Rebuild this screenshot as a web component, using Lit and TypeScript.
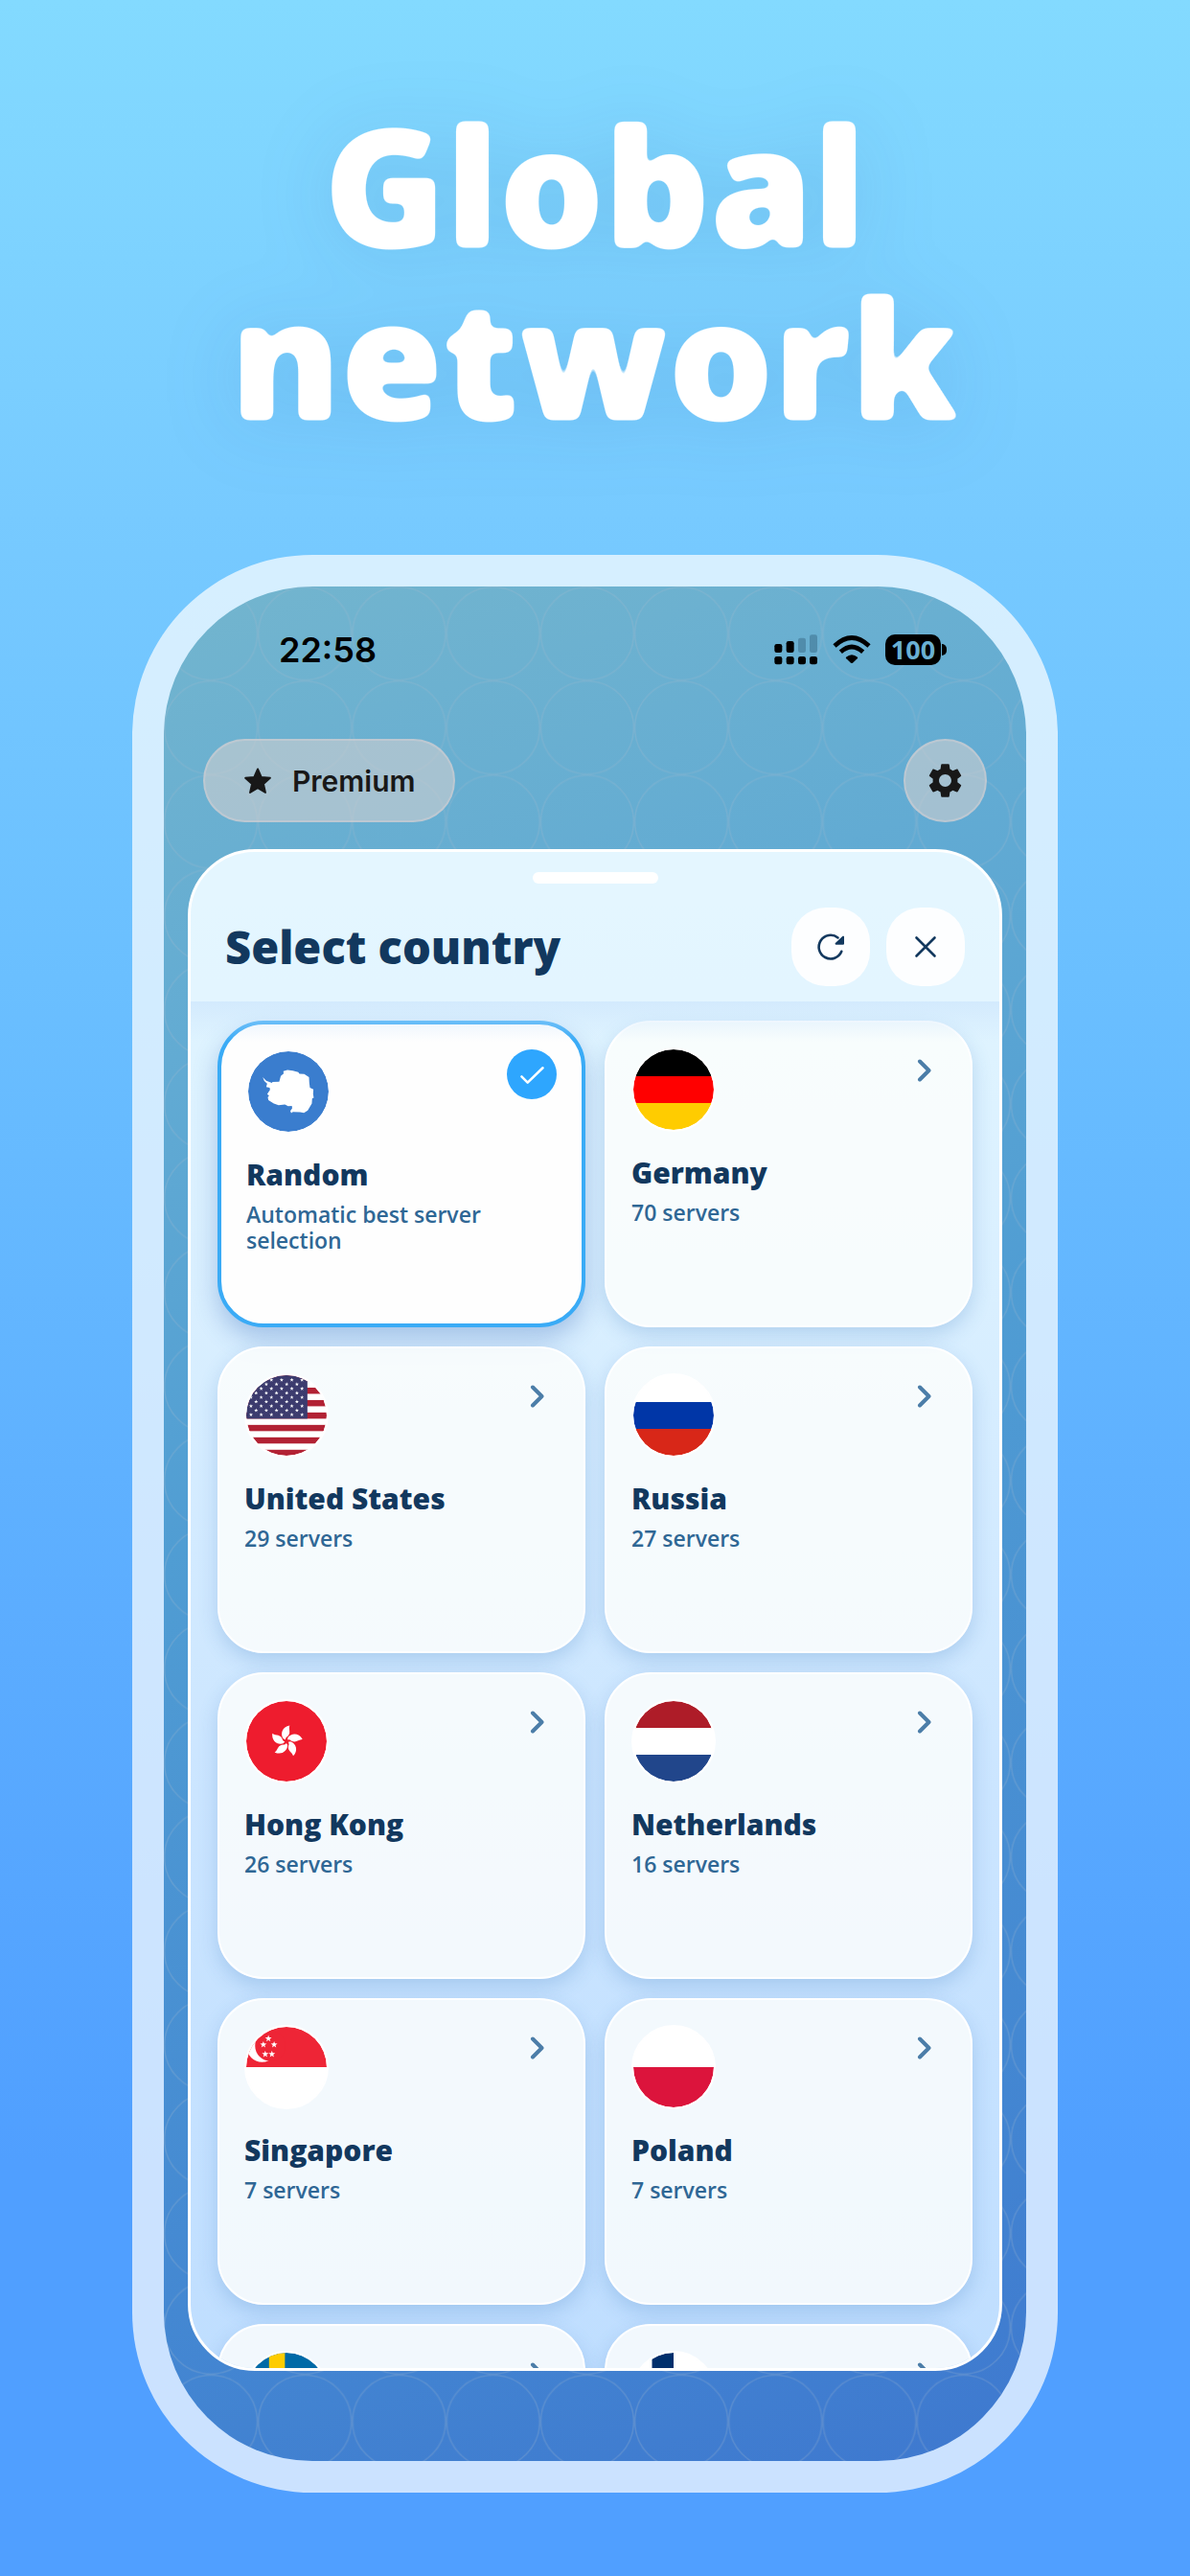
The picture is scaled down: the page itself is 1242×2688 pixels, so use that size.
import { LitElement, html, svg, css, nothing } from "lit";
import { customElement, property, state } from "lit/decorators.js";

interface Country {
  id: string;
  name?: string;
  detail?: string;
}

const COUNTRIES: Country[] = [
  { id: "random", name: "Random", detail: "Automatic best server selection" },
  { id: "de", name: "Germany", detail: "70 servers" },
  { id: "us", name: "United States", detail: "29 servers" },
  { id: "ru", name: "Russia", detail: "27 servers" },
  { id: "hk", name: "Hong Kong", detail: "26 servers" },
  { id: "nl", name: "Netherlands", detail: "16 servers" },
  { id: "sg", name: "Singapore", detail: "7 servers" },
  { id: "pl", name: "Poland", detail: "7 servers" },
  { id: "se" },
  { id: "fi" },
];

/** Points of a five-pointed star centred on (cx, cy). */
const starPoints = (cx: number, cy: number, r: number): string =>
  Array.from({ length: 10 }, (_, i) => {
    const radius = i % 2 ? r * 0.4 : r;
    const angle = (Math.PI / 5) * i - Math.PI / 2;
    return `${(cx + radius * Math.cos(angle)).toFixed(1)},${(cy + radius * Math.sin(angle)).toFixed(1)}`;
  }).join(" ");

const star = (cx: number, cy: number, r: number) =>
  svg`<polygon points=${starPoints(cx, cy, r)} fill="#fff"></polygon>`;

const bands = (...colors: string[]) =>
  colors.map(
    (color, i) =>
      svg`<rect x="0" y=${(254 / colors.length) * i} width="254" height=${254 / colors.length + 1} fill=${color}></rect>`,
  );

const usStars = () =>
  Array.from({ length: 9 }, (_, row) =>
    Array.from({ length: row % 2 ? 5 : 6 }, (_, col) =>
      star(15 + col * 32.2 + (row % 2 ? 16.1 : 0), 15 + row * 13.7, 6.5),
    ),
  );

const FLAGS: Record<string, unknown> = {
  random: svg`
    <rect width="254" height="254" fill="#3a7dce"></rect>
    <path fill="#fff" d="M46 82L57 93L75 100L70 107L77 97L98 96L103 78L112 70L111 63L124 59L141 61L158 66L162 71L177 72L192 82L193 100L195 115L206 120L205 135L207 147L202 149L201 165L188 187L176 194L164 192L141 191L136 195L133 188L139 180L138 172L126 173L116 168L96 170L81 165L64 154L62 145L66 140L60 135L69 122L68 115L57 113L60 102L51 94Z"></path>`,
  de: bands("#000", "#f00", "#fc0"),
  us: svg`
    <rect width="254" height="254" fill="#fff"></rect>
    ${[0, 2, 4, 6, 8, 10, 12].map((i) => svg`<rect y=${i * 19.6} width="254" height="19.6" fill="#b22234"></rect>`)}
    <rect width="193" height="137.2" fill="#3c3b6e"></rect>${usStars()}`,
  ru: bands("#fff", "#0036a7", "#d82718"),
  hk: svg`
    <rect width="254" height="254" fill="#ee1c2e"></rect>
    ${[0, 72, 144, 216, 288].map(
      (a) => svg`<path fill="#fff" transform="rotate(${a} 127 127)" d="M117 119C106 103 114 81 137 77C132 91 145 103 126 115Q124 118 124 122Q120 121 117 119Z"></path>`,
    )}`,
  nl: bands("#ae1c28", "#fff", "#21468b"),
  sg: svg`
    <rect width="254" height="254" fill="#fff"></rect>
    <rect width="254" height="127" fill="#ee2536"></rect>
    <circle cx="50" cy="62" r="49" fill="#fff"></circle>
    <circle cx="76" cy="60" r="48" fill="#ee2536"></circle>
    ${star(70, 37, 11)}${star(54, 56, 11)}${star(88, 56, 11)}${star(60, 86, 11)}${star(81, 86, 11)}`,
  pl: bands("#fff", "#dc143c"),
  se: svg`
    <rect width="254" height="254" fill="#006aa7"></rect>
    <path fill="#fecc00" d="M72 0h50v254H72zM0 102h254v50H0z"></path>`,
  fi: svg`
    <rect width="254" height="254" fill="#fff"></rect>
    <path fill="#002f6c" d="M59 0h68v254H59zM0 93h254v68H0z"></path>`,
};

@customElement("country-card")
export class CountryCard extends LitElement {
  @property({ attribute: false }) country!: Country;
  @property({ type: Boolean }) selected = false;

  static styles = css`
    :host {
      display: block;
      min-width: 0;
    }
    .card {
      box-sizing: border-box;
      display: grid;
      grid-template-columns: 1fr auto;
      align-content: start;
      width: 100%;
      height: 320px;
      padding: 26px;
      border: 2px solid #fff;
      border-radius: 48px;
      background: rgba(255, 255, 253, 0.79);
      box-shadow: 0 8px 20px rgba(60, 120, 190, 0.24);
      color: #12385e;
      font: inherit;
      text-align: left;
      cursor: pointer;
    }
    .selected {
      border: 4px solid #3aabf6;
      background: #fefefe;
      box-shadow: 0 12px 26px rgba(50, 100, 180, 0.32);
    }
    .flag {
      box-sizing: border-box;
      display: block;
      width: 88px;
      height: 88px;
      border: 2px solid #fff;
      border-radius: 50%;
      background: #fff;
    }
    .chevron {
      display: block;
      width: 24px;
      height: 24px;
      margin: 12px 10px 0 0;
    }
    .check {
      display: block;
      width: 52px;
      height: 52px;
    }
    .name {
      grid-column: 1 / -1;
      margin-top: 23px;
      font-size: 30px;
      font-weight: 800;
      line-height: 40px;
    }
    .detail {
      grid-column: 1 / -1;
      margin-top: 8px;
      padding-right: 60px;
      color: #2f6795;
      font-size: 23px;
      font-weight: 600;
      line-height: 27px;
    }
  `;

  render() {
    const { id, name, detail } = this.country;
    return html`
      <button class="card ${this.selected ? "selected" : ""}" aria-pressed=${this.selected ? "true" : "false"}>
        <svg class="flag" viewBox="0 0 254 254" aria-hidden="true">
          <clipPath id="round"><circle cx="127" cy="127" r="127"></circle></clipPath>
          <g clip-path="url(#round)">${FLAGS[id]}</g>
        </svg>
        ${this.selected
          ? html`<svg class="check" viewBox="0 0 54 54" aria-hidden="true">
              <circle cx="27" cy="27" r="27" fill="#2ea6fe"></circle>
              <path d="M16 29.5l6.500 6.500L39 20" fill="none" stroke="#fff" stroke-width="2.600" stroke-linecap="round" stroke-linejoin="round"></path>
            </svg>`
          : html`<svg class="chevron" viewBox="0 0 24 24" aria-hidden="true">
              <path d="M7 2.500L16.500 12L7 21.500" fill="none" stroke="#4b7da8" stroke-width="4" stroke-linecap="round" stroke-linejoin="round"></path>
            </svg>`}
        ${name ? html`<span class="name">${name}</span>` : nothing}
        ${detail ? html`<span class="detail">${detail}</span>` : nothing}
      </button>
    `;
  }
}

@customElement("app-root")
export class AppRoot extends LitElement {
  @state() private selectedId = "random";

  static styles = css`
    :host {
      display: block;
      font-family: "Open Sans", "Noto Sans", sans-serif;
    }
    .poster {
      box-sizing: border-box;
      display: flex;
      flex-direction: column;
      height: 100vh;
      padding: 101px 138px 87px;
      background: linear-gradient(#83daff 0%, #77caff 20%, #6abfff 38%, #5bacff 64%, #509fff 84%);
    }
    .defs {
      position: absolute;
      width: 0;
      height: 0;
    }
    .headline {
      margin: 0 0 118px;
      color: #fff;
      font-size: 172px;
      font-weight: 800;
      line-height: 180px;
      text-align: center;
      filter: url(#soft-corners) drop-shadow(0 6px 40px rgba(20, 80, 140, 0.14));
    }
    .phone {
      flex: 1;
      display: flex;
      min-height: 0;
      padding: 33px;
      border-radius: 188px;
      background: rgba(255, 255, 255, 0.7);
    }
    .screen {
      box-sizing: border-box;
      position: relative;
      flex: 1;
      display: flex;
      flex-direction: column;
      min-width: 0;
      padding: 39px 0 94px;
      border-radius: 155px;
      overflow: hidden;
      background: linear-gradient(162deg, #73b5ce 0%, #62abd3 22%, #509dd3 45%, #4488d2 80%, #3e78cf 100%);
    }
    .pattern {
      position: absolute;
      inset: 0;
      width: 100%;
      height: 100%;
    }
    .status,
    .toolbar,
    .sheet {
      position: relative;
    }
    .status {
      display: flex;
      align-items: center;
      justify-content: space-between;
      height: 54px;
      padding: 0 83px 0 120px;
      font-family: Inter, sans-serif;
    }
    .time {
      font-size: 36px;
      font-weight: 600;
      line-height: 54px;
      color: #000;
    }
    .indicators {
      display: flex;
      align-items: center;
    }
    .signal {
      width: 46px;
      height: 32px;
      margin-right: 15px;
    }
    .wifi {
      width: 40px;
      height: 30px;
      margin-right: 15px;
    }
    .battery {
      display: flex;
      align-items: center;
      gap: 1px;
    }
    .level {
      width: 58px;
      height: 32px;
      border-radius: 10px;
      background: #000;
      color: #6ab0d3;
      font-family: "Open Sans", sans-serif;
      font-size: 27px;
      font-weight: 700;
      line-height: 32px;
      text-align: center;
    }
    .tip {
      width: 5px;
      height: 12px;
      border-radius: 0 6px 6px 0;
      background: #000;
    }
    .toolbar {
      display: flex;
      justify-content: space-between;
      margin: 66px 41px 28px;
    }
    .pill {
      box-sizing: border-box;
      display: flex;
      align-items: center;
      justify-content: center;
      height: 87px;
      border: 2px solid rgba(205, 205, 210, 0.6);
      border-radius: 44px;
      background: rgba(206, 206, 208, 0.6);
      color: #181818;
      cursor: pointer;
    }
    .premium {
      gap: 20px;
      padding: 0 39px;
      font-family: Inter, sans-serif;
      font-size: 30px;
      font-weight: 600;
    }
    .premium svg {
      width: 32px;
      height: 32px;
    }
    .settings {
      width: 87px;
      padding: 0;
    }
    .settings svg {
      width: 43px;
      height: 43px;
    }
    .sheet {
      flex: 1;
      display: flex;
      flex-direction: column;
      min-height: 0;
      margin: 0 25px;
      border: 3px solid #fff;
      border-radius: 70px;
      overflow: hidden;
      background: linear-gradient(#e2f6ff 0%, #d9efff 30%, #cbe5ff 62%, #bfdeff 100%);
    }
    .sheet-head {
      padding: 21px 36px 16px;
      background: rgba(232, 247, 255, 0.4);
    }
    .handle {
      width: 131px;
      height: 12px;
      margin: 0 auto 25px;
      border-radius: 6px;
      background: #fff;
    }
    .title-row {
      display: flex;
      align-items: center;
      gap: 17px;
    }
    .title {
      flex: 1;
      margin: 0;
      color: #12385e;
      font-size: 47px;
      font-weight: 800;
      line-height: 64px;
    }
    .round {
      display: flex;
      align-items: center;
      justify-content: center;
      width: 82px;
      height: 82px;
      padding: 0;
      border: 0;
      border-radius: 36px;
      background: #fdfeff;
      cursor: pointer;
    }
    .round svg {
      width: 40px;
      height: 40px;
    }
    .list-area {
      position: relative;
      flex: 1;
      display: flex;
      min-height: 0;
    }
    .list-area::before {
      content: "";
      position: absolute;
      z-index: 1;
      inset: 0 0 auto;
      height: 42px;
      background: linear-gradient(rgba(205, 229, 252, 0.65), rgba(214, 234, 252, 0));
      pointer-events: none;
    }
    .list {
      flex: 1;
      display: grid;
      grid-template-columns: 1fr 1fr;
      align-content: start;
      gap: 20px;
      margin: 0;
      padding: 20px 28px;
      overflow-y: auto;
      scrollbar-width: none;
      list-style: none;
    }
    .item {
      min-width: 0;
    }
  `;

  private renderStatus() {
    return html`
      <div class="status">
        <span class="time">22:58</span>
        <div class="indicators">
          <svg class="signal" viewBox="0 0 138 96" aria-hidden="true">
            <g fill="#000">
              <rect x="1" y="30" width="24" height="27" rx="7"></rect>
              <rect x="38" y="21" width="24" height="36" rx="7"></rect>
              <rect x="1" y="69" width="24" height="25" rx="7"></rect>
              <rect x="38" y="69" width="24" height="25" rx="7"></rect>
              <rect x="75" y="69" width="24" height="25" rx="7"></rect>
              <rect x="111" y="69" width="24" height="25" rx="7"></rect>
            </g>
            <g fill="#508cab">
              <rect x="75" y="11" width="24" height="46" rx="7"></rect>
              <rect x="111" y="1" width="24" height="56" rx="7"></rect>
            </g>
          </svg>
          <svg class="wifi" viewBox="0 0 120 90" aria-hidden="true">
            <g fill="none" stroke="#000" stroke-width="14">
              <path d="M6 33Q60 -18 114 33"></path>
              <path d="M25 52Q60 20 95 52"></path>
            </g>
            <path d="M42 68Q60 53 78 68Q80 70 77 73L63 86Q60 88 57 86L43 73Q40 70 42 68Z"></path>
          </svg>
          <div class="battery"><span class="level">100</span><span class="tip"></span></div>
        </div>
      </div>
    `;
  }

  private renderToolbar() {
    return html`
      <div class="toolbar">
        <button class="pill premium">
          <svg viewBox="0 0 24 24" aria-hidden="true">
            <path
              d="M12 2.600L14.800 8.900L21.700 9.600L16.500 14.200L18 21L12 17.400L6 21L7.500 14.200L2.300 9.600L9.200 8.900Z"
              fill="#181818" stroke="#181818" stroke-width="1.400" stroke-linejoin="round"
            ></path>
          </svg>
          Premium
        </button>
        <button class="pill settings" aria-label="Settings">
          <svg viewBox="0 0 24 24" aria-hidden="true">
            <path
              fill="#181818"
              d="M19.140 12.940c.04-.3.060-.61.060-.94 0-.32-.02-.64-.07-.94l2.030-1.580c.18-.14.230-.41.120-.61l-1.920-3.320c-.12-.22-.37-.29-.59-.22l-2.390.96c-.5-.38-1.030-.7-1.620-.94l-.36-2.540c-.04-.24-.24-.41-.48-.41h-3.840c-.24 0-.43.170-.47.410l-.36 2.540c-.59.240-1.130.570-1.620.940l-2.390-.96c-.22-.08-.47 0-.59.220L2.740 8.870c-.12.210-.08.470.120.610l2.030 1.580c-.05.3-.09.630-.09.940s.020.640.070.940l-2.030 1.580c-.18.140-.23.410-.12.610l1.920 3.320c.12.220.370.290.590.220l2.390-.96c.5.380 1.030.7 1.620.940l.36 2.540c.05.240.240.410.480.410h3.840c.24 0 .44-.17.470-.41l.36-2.540c.59-.24 1.130-.56 1.620-.94l2.390.96c.22.080.470 0 .59-.22l1.920-3.320c.12-.22.070-.47-.12-.61l-2.010-1.580zM12 15.600c-1.980 0-3.600-1.620-3.600-3.600s1.620-3.600 3.600-3.600 3.600 1.620 3.600 3.600-1.620 3.600-3.600 3.600z"
            ></path>
          </svg>
        </button>
      </div>
    `;
  }

  private renderSheet() {
    return html`
      <section class="sheet" aria-labelledby="sheet-title">
        <div class="sheet-head">
          <div class="handle"></div>
          <div class="title-row">
            <h2 class="title" id="sheet-title">Select country</h2>
            <button class="round" aria-label="Refresh">
              <svg viewBox="0 0 40 40" aria-hidden="true">
                <path d="M31.300 24.800A12.300 12.300 0 1 1 27.500 10.400" fill="none" stroke="#12385e" stroke-width="2.600" stroke-linecap="round"></path>
                <path d="M33 9.600V16.800H25.600Z" fill="#12385e" stroke="#12385e" stroke-width="2" stroke-linejoin="round"></path>
              </svg>
            </button>
            <button class="round" aria-label="Close">
              <svg viewBox="0 0 40 40" aria-hidden="true">
                <path d="M10.500 10.500L29.500 29.500M29.500 10.500L10.500 29.500" fill="none" stroke="#12385e" stroke-width="2.600" stroke-linecap="round"></path>
              </svg>
            </button>
          </div>
        </div>
        <div class="list-area">
          <ul class="list">
            ${COUNTRIES.map(
              (country) => html`<li class="item">
                <country-card
                  .country=${country}
                  ?selected=${country.id === this.selectedId}
                  @click=${() => (this.selectedId = country.id)}
                ></country-card>
              </li>`,
            )}
          </ul>
        </div>
      </section>
    `;
  }

  render() {
    return html`
      <svg class="defs" aria-hidden="true">
        <filter id="soft-corners" color-interpolation-filters="sRGB">
          <feGaussianBlur stdDeviation="4"></feGaussianBlur>
          <feColorMatrix values="0 0 0 0 1  0 0 0 0 1  0 0 0 0 1  0 0 0 10 -4"></feColorMatrix>
        </filter>
      </svg>
      <main class="poster">
        <h1 class="headline">Global<br />network</h1>
        <div class="phone">
          <div class="screen">
            <svg class="pattern" aria-hidden="true">
              <pattern id="rings" width="98.200" height="98.200" patternUnits="userSpaceOnUse">
                <circle cx="49.100" cy="49.100" r="48.500" fill="none" stroke="#a4b8cc" stroke-opacity="0.26" stroke-width="1.500"></circle>
              </pattern>
              <rect width="100%" height="100%" fill="url(#rings)"></rect>
            </svg>
            ${this.renderStatus()} ${this.renderToolbar()} ${this.renderSheet()}
          </div>
        </div>
      </main>
    `;
  }
}
